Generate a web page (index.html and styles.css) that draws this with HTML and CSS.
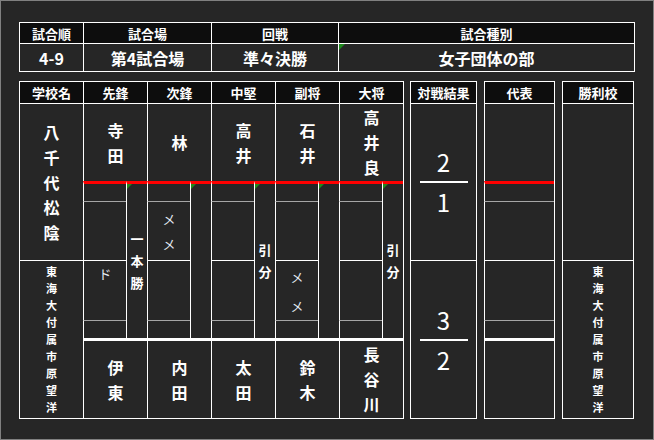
FILE: index.html
```html
<!DOCTYPE html>
<html lang="ja">
<head>
<meta charset="utf-8">
<title>試合結果</title>
<link rel="stylesheet" href="styles.css">
</head>
<body>
<div class="sheet">
  <div class="info">
    <div class="c hd">試合順</div>
    <div class="c hd">試合場</div>
    <div class="c hd">回戦</div>
    <div class="c hd">試合種別</div>
    <div class="c val">4-9</div>
    <div class="c val">第4試合場</div>
    <div class="c val">準々決勝</div>
    <div class="c val flag">女子団体の部</div>
  </div>

  <div class="board">
    <div class="players">
      <div class="c hd">学校名</div>
      <div class="c hd s2">先鋒</div>
      <div class="c hd s2">次鋒</div>
      <div class="c hd s2">中堅</div>
      <div class="c hd s2">副将</div>
      <div class="c hd s2">大将</div>

      <div class="c school r3"><span class="stack">八千代松陰</span></div>
      <div class="c nm s2"><span class="stack">寺田</span></div>
      <div class="c nm s2"><span class="stack">林</span></div>
      <div class="c nm s2"><span class="stack">高井</span></div>
      <div class="c nm s2"><span class="stack">石井</span></div>
      <div class="c nm s2"><span class="stack">高井良</span></div>

      <div class="c m1"></div><div class="c side flag"><span class="stack res">一本勝</span></div>
      <div class="c m1"></div><div class="c side flag"></div>
      <div class="c m1"></div><div class="c side flag"><span class="stack res">引分</span></div>
      <div class="c m1"></div><div class="c side flag"></div>
      <div class="c m1"></div><div class="c side flag"><span class="stack res">引分</span></div>

      <div class="c m2"></div>
      <div class="c m2"><span class="stack mark">メメ</span></div>
      <div class="c m2"></div>
      <div class="c m2"></div>
      <div class="c m2"></div>

      <div class="c small-school r3"><span class="stack">東海大付属市原望洋</span></div>
      <div class="c m3 top"><span class="stack mark">ド</span></div>
      <div class="c m3"></div>
      <div class="c m3"></div>
      <div class="c m3"><span class="stack mark wide">メメ</span></div>
      <div class="c m3"></div>

      <div class="c m4"></div>
      <div class="c m4"></div>
      <div class="c m4"></div>
      <div class="c m4"></div>
      <div class="c m4"></div>

      <div class="c nm2 s2"><span class="stack">伊東</span></div>
      <div class="c nm2 s2"><span class="stack">内田</span></div>
      <div class="c nm2 s2"><span class="stack">太田</span></div>
      <div class="c nm2 s2"><span class="stack">鈴木</span></div>
      <div class="c nm2 s2"><span class="stack">長谷川</span></div>
    </div>

    <div class="result">
      <div class="c hd">対戦結果</div>
      <div class="c half">
        <div class="frac"><span class="num">2</span><span class="bar"></span><span class="num">1</span></div>
      </div>
      <div class="c half">
        <div class="frac"><span class="num">3</span><span class="bar thin"></span><span class="num">2</span></div>
      </div>
    </div>

    <div class="rep">
      <div class="c hd">代表</div>
      <div class="c nm"></div>
      <div class="c m1"></div>
      <div class="c m2"></div>
      <div class="c m3"></div>
      <div class="c m4"></div>
      <div class="c nm2"></div>
    </div>

    <div class="winner">
      <div class="c hd">勝利校</div>
      <div class="c half"></div>
      <div class="c half small-school"><span class="stack">東海大付属市原望洋</span></div>
    </div>
  </div>
</div>
</body>
</html>
```

FILE: styles.css
```css
* {
  box-sizing: border-box;
  margin: 0;
  padding: 0;
}

body {
  margin: 0;
  background: #262626;
  color: #fff;
  font-family: "Noto Sans CJK JP", "Noto Sans", sans-serif;
}

.sheet {
  width: 654px;
  height: 440px;
  border: 1px solid #808080;
  background: #262626;
  padding: 21px 0 0 18px;
}

.info {
  display: grid;
  grid-template-columns: 64px 128px 127px 296px;
  grid-template-rows: 21px 28px;
  width: max-content;
  border-right: 1px solid #fff;
  border-bottom: 1px solid #fff;
}

.c {
  border-left: 1px solid #fff;
  border-top: 1px solid #fff;
  display: flex;
  align-items: center;
  justify-content: center;
  position: relative;
  min-width: 0;
}

.hd {
  background: #0d0d0d;
  font-size: 13px;
  font-weight: 700;
  line-height: 1;
  white-space: nowrap;
}

.val {
  font-size: 16px;
  font-weight: 700;
  line-height: 1;
}

.flag::before {
  content: "";
  position: absolute;
  left: 0;
  top: 0;
  border-top: 6px solid #1d8a1d;
  border-right: 6px solid transparent;
}

.side.flag::before {
  border-top-width: 5px;
  border-right-width: 5px;
}

.board {
  display: flex;
  align-items: flex-start;
  margin-top: 9px;
}

.players {
  display: grid;
  grid-template-columns: 64px repeat(5, 43px 21px);
  grid-template-rows: 22px 78px 20px 59px 60px 18px 80px;
  border-right: 1px solid #fff;
  border-bottom: 1px solid #fff;
}

.s2 { grid-column: span 2; }
.r3 { grid-row: span 3; }

.stack {
  display: block;
  width: 1em;
  word-break: break-all;
  text-align: center;
}

.school,
.nm,
.nm2 {
  font-size: 16px;
  font-weight: 700;
  line-height: 25px;
}

.nm2 {
  border-top: 3px solid #fff;
}

.m1 {
  border-top: 3px solid #ff0000;
}

.side {
  grid-row: span 4;
  border-top: 3px solid #ff0000;
}

.m2,
.m4 {
  border-top: 1px solid #a6a6a6;
}

.m3 {
  border-top: 1px solid #fff;
}

.res {
  font-size: 13px;
  font-weight: 700;
  line-height: 22px;
}

.mark {
  font-size: 13px;
  font-weight: 400;
  line-height: 25px;
  color: #e4ecf4;
}

.mark.wide {
  line-height: 29px;
}

.top {
  align-items: flex-start;
}

.top .mark {
  margin-top: 0;
}

.small-school {
  font-size: 11px;
  font-weight: 700;
  line-height: 17px;
}

.result {
  display: grid;
  grid-template-columns: 66px;
  grid-template-rows: 22px 157px 158px;
  border-right: 1px solid #fff;
  border-bottom: 1px solid #fff;
  margin-left: 6px;
}

.frac {
  display: flex;
  flex-direction: column;
  align-items: center;
}

.num {
  font-size: 24px;
  line-height: 38px;
  font-weight: 400;
}

.bar {
  width: 48px;
  height: 2px;
  background: #fff;
}

.bar.thin {
  height: 2px;
}

.rep {
  display: grid;
  grid-template-columns: 70px;
  grid-template-rows: 22px 78px 20px 59px 60px 18px 80px;
  border-right: 1px solid #fff;
  border-bottom: 1px solid #fff;
  margin-left: 7px;
}

.winner {
  display: grid;
  grid-template-columns: 71px;
  grid-template-rows: 22px 157px 158px;
  border-right: 1px solid #fff;
  border-bottom: 1px solid #fff;
  margin-left: 7px;
}
```
